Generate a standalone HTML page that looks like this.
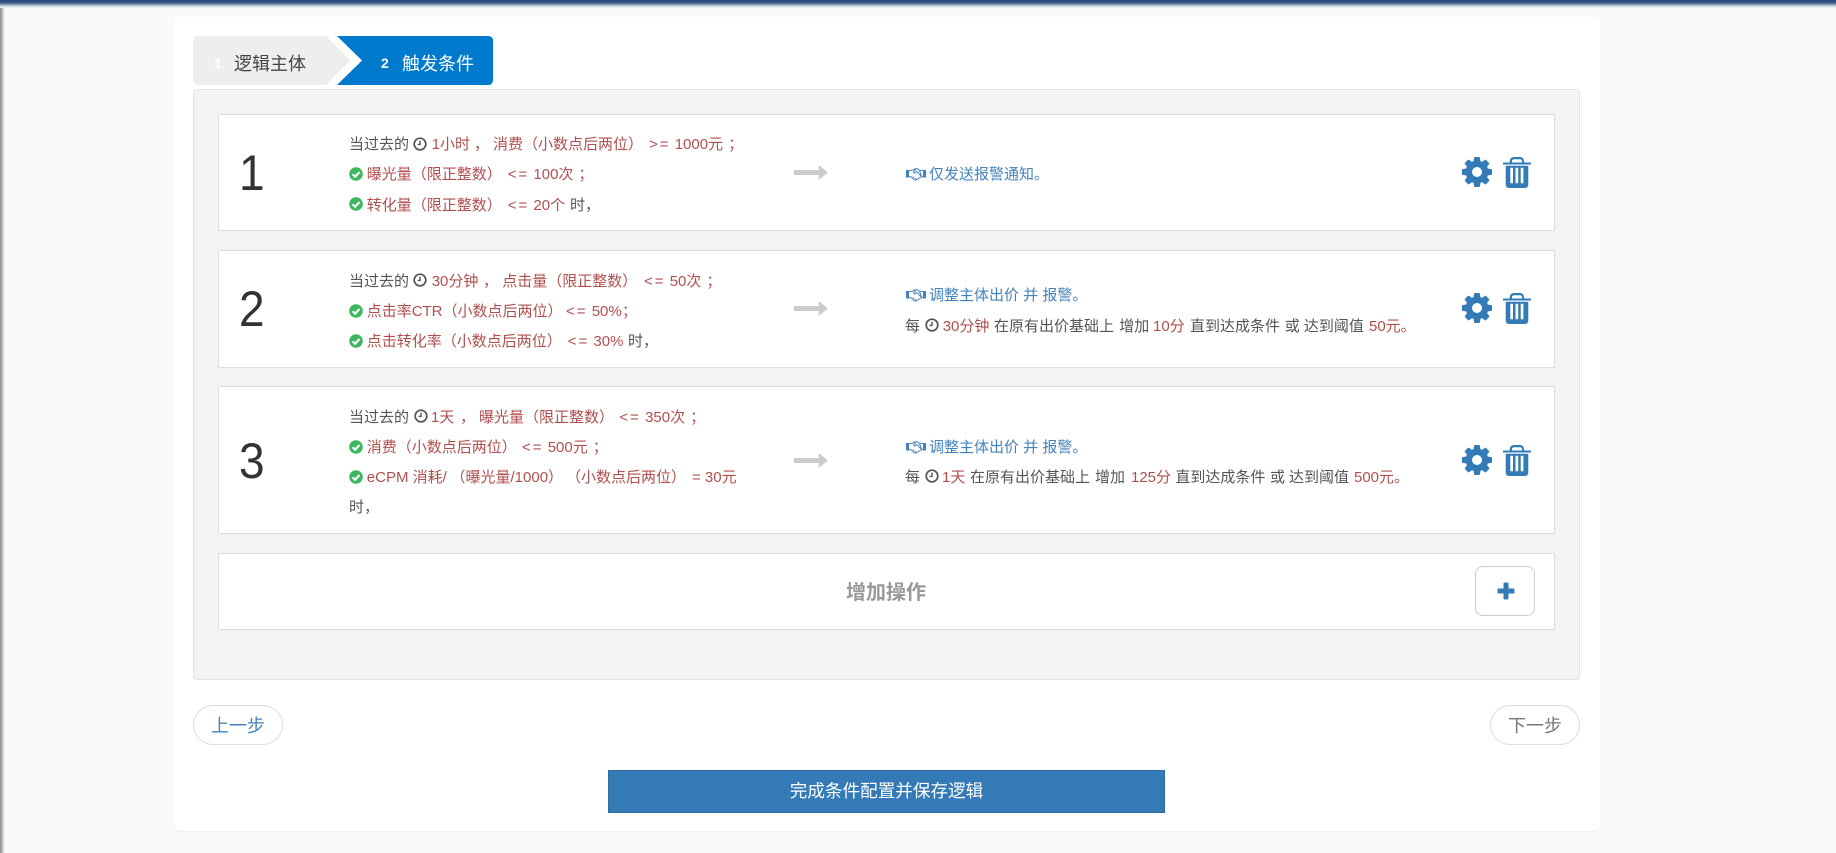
<!DOCTYPE html>
<html lang="zh-CN">
<head>
<meta charset="utf-8">
<title>触发条件</title>
<style>
html,body{margin:0;padding:0;width:1836px;height:853px;overflow:hidden;background:#fafafa;}
body{position:relative;font-family:"Liberation Sans","Noto Sans CJK SC",sans-serif;font-size:15px;color:#555;}
.abs{position:absolute;box-sizing:border-box;}
.top{left:0;top:0;width:1836px;height:8px;background:linear-gradient(to bottom,#28497c 0,#35548a 30%,#6f86a8 50%,#c8d0da 75%,#fafafa 100%);z-index:5;}
.lft{left:0;top:0;width:5px;height:853px;background:linear-gradient(to right,#8a8a8a 0,#b0b0b0 35%,#e0e0e0 70%,#fafafa 100%);z-index:4;}
.card{left:174px;top:17px;width:1426px;height:814px;background:#fff;border-radius:6px;box-shadow:0 1px 1px rgba(0,0,0,.06);}
.panel{left:193px;top:89px;width:1387px;height:591px;background:#f4f4f4;border:1px solid #e3e3e3;border-radius:4px;}
.row{left:218px;width:1337px;background:#fff;border:1px solid #ddd;}
.num{position:absolute;left:239px;font-size:50px;line-height:60px;color:#333;font-weight:400;transform:scaleX(.92);transform-origin:left center;}
.t{position:absolute;height:30px;line-height:30px;white-space:nowrap;margin-top:2px;}
.g{color:#555;}.r{color:#b0504e;}.b{color:#4383bd;}
.o{letter-spacing:2px;}
.s{display:inline-block;margin-left:5px;}
svg.i{position:absolute;display:block;overflow:visible;}
.tab{font-size:18px;line-height:30px;white-space:nowrap;position:absolute;margin-top:2px;}
.btn{background:#fff;border:1px solid #ddd;border-radius:20px;font-size:18px;text-align:center;line-height:40px;height:40px;}
.save{left:608px;top:770px;width:557px;height:43px;background:#337ab7;border:1px solid #2e6da4;color:#fff;font-size:17.6px;line-height:41px;text-align:center;}
</style>
</head>
<body>
<svg width="0" height="0" style="position:absolute">
<defs>
<symbol id="clock" viewBox="0 0 14 14"><circle cx="7" cy="7" r="5.8" fill="none" stroke="#555" stroke-width="1.7"/><path d="M7 3.6V7.4H4.6" fill="none" stroke="#555" stroke-width="1.4"/></symbol>
<symbol id="ok" viewBox="0 0 14 14"><circle cx="7" cy="7" r="6.8" fill="#3fb760"/><path d="M3.6 7.2L6.1 9.7L10.5 5" fill="none" stroke="#fff" stroke-width="2.1"/></symbol>
<symbol id="hand" viewBox="0 0 20 14"><path d="M0 3H3V10.500H0ZM17 3H20V10.500H17Z" fill="#4383bd"/><path d="M3 3.400L6.500 3.400L9 1.800L11.500 1.800L13.500 3.400L17 3.400M3 9.600L4.600 9.600L8.600 13L10.400 13L15.400 9.600L17 9.600M13.500 3.400L15.600 9.400M9.800 2.200L7.400 5.200L8.900 6.100L10.800 4.400L14.800 8.800M7 10.800L8.200 9.600M9.200 12L10.400 10.800" fill="none" stroke="#4383bd" stroke-width="1"/></symbol>
<symbol id="gear" viewBox="128 128 1536 1536"><path fill="#337ab7" d="M1152 896q0-106-75-181t-181-75-181 75-75 181 75 181 181 75 181-75 75-181zm512-109v222q0 12-8 23t-20 13l-185 28q-19 54-39 91 35 50 107 138 10 12 10 25t-9 23q-27 37-99 108t-94 71q-12 0-26-9l-138-108q-44 23-91 38-16 136-29 186-7 28-36 28h-222q-14 0-24.5-8.5t-11.5-21.5l-28-184q-49-16-90-37l-141 107q-10 9-25 9-14 0-25-11-126-114-165-168-7-10-7-23 0-12 8-23 15-21 51-66.5t54-70.5q-27-50-41-99l-183-27q-13-2-21-12.5t-8-23.5v-222q0-12 8-23t19-13l186-28q14-46 39-92-40-57-107-138-10-12-10-24 0-10 9-23 26-36 98.5-107.5t94.5-71.5q13 0 26 10l138 107q44-23 91-38 16-136 29-186 7-28 36-28h222q14 0 24.5 8.5t11.5 21.5l28 184q49 16 90 37l142-107q9-9 24-9 13 0 25 10 129 119 165 170 7 8 7 22 0 12-8 23-15 21-51 66.5t-54 70.5q26 50 41 98l183 28q13 2 21 12.5t8 23.5z"/></symbol>
<symbol id="trash" viewBox="0 0 28 31"><path fill="#337ab7" fill-rule="evenodd" d="M6.700 5.500V4.500Q6.700 0 11.500 0H16.500Q21 0 21 4.500V5.500H27.200Q28 5.500 28 6.300V7.500H0V6.300Q0 5.500 .8 5.500ZM9 5.500H19V4.200Q19 2.200 16.500 2.200H11.500Q9 2.200 9 4.200ZM2.700 8.800H25.300V27.400Q25.300 31 21.700 31H6.300Q2.700 31 2.700 27.400ZM7.300 10.700V26.200H10V10.700ZM12.500 10.700V26.200H15.200V10.700ZM17.700 10.700V26.200H20.400V10.700Z"/></symbol>
</defs>
</svg>

<div class="abs top"></div>
<div class="abs lft"></div>
<div class="abs card"></div>

<!-- tabs -->
<svg class="i" style="left:193px;top:36px" width="302" height="50" viewBox="0 0 302 50">
<path d="M5 0H133L157.500 24.500L133 49H5Q0 49 0 44V5Q0 0 5 0Z" fill="#eeeeee"/>
<path d="M144 0H295Q300 0 300 5V44Q300 49 295 49H144L169 24.500Z" fill="#007acc"/>
</svg>
<div class="tab" style="left:214px;top:46px;color:#fff;font-size:14px;font-weight:700">1</div>
<div class="tab" style="left:234px;top:47px;color:#444">逻辑主体</div>
<div class="tab" style="left:381px;top:46px;color:#fff;font-size:14px;font-weight:700">2</div>
<div class="tab" style="left:402px;top:47px;color:#fff">触发条件</div>

<div class="abs panel"></div>
<div class="abs row" style="top:114px;height:117px"></div>
<div class="abs row" style="top:250px;height:118px"></div>
<div class="abs row" style="top:386px;height:148px"></div>
<div class="abs row" style="top:553px;height:77px"></div>

<div class="num" style="top:143px">1</div>
<div class="num" style="top:279px">2</div>
<div class="num" style="top:431px">3</div>

<!-- row 1 -->
<span class="t g" style="left:349px;top:128px">当过去的</span>
<svg class="i" style="left:413px;top:137px" width="14" height="14"><use href="#clock"/></svg>
<span class="t r" style="left:431.700px;top:128px">1小时</span>
<span class="t r" style="left:474px;top:128px">，</span>
<span class="t r" style="left:493px;top:128px">消费（小数点后两位）</span>
<span class="t r" style="left:649px;top:128px"><span class="o">&gt;=</span> 1000元<span class="s">；</span></span>

<svg class="i" style="left:349px;top:167px" width="14" height="14"><use href="#ok"/></svg>
<span class="t r" style="left:366.700px;top:158px">曝光量（限正整数）</span>
<span class="t r" style="left:507.700px;top:158px"><span class="o">&lt;=</span> 100次<span class="s">；</span></span>

<svg class="i" style="left:349px;top:197px" width="14" height="14"><use href="#ok"/></svg>
<span class="t r" style="left:366.700px;top:189px">转化量（限正整数）</span>
<span class="t r" style="left:507.700px;top:189px"><span class="o">&lt;=</span> 20个</span>
<span class="t g" style="left:570px;top:189px">时，</span>

<svg class="i" style="left:794px;top:165px" width="34" height="15" viewBox="0 0 34 15"><path d="M0 5H24.700V0L34 7.500L24.700 15V10H0Z" fill="#cccccc"/></svg>
<svg class="i" style="left:905.500px;top:166.500px" width="20" height="14"><use href="#hand"/></svg>
<span class="t b" style="left:929px;top:158px">仅发送报警通知。</span>
<svg class="i" style="left:1462px;top:157px" width="30" height="30"><use href="#gear"/></svg>
<svg class="i" style="left:1503px;top:157px" width="28" height="31"><use href="#trash"/></svg>

<!-- row 2 -->
<span class="t g" style="left:349px;top:265px">当过去的</span>
<svg class="i" style="left:413px;top:273px" width="14" height="14"><use href="#clock"/></svg>
<span class="t r" style="left:431.700px;top:265px">30分钟</span>
<span class="t r" style="left:483px;top:265px">，</span>
<span class="t r" style="left:502.300px;top:265px">点击量（限正整数）</span>
<span class="t r" style="left:644px;top:265px"><span class="o">&lt;=</span> 50次<span class="s">；</span></span>

<svg class="i" style="left:349px;top:304px" width="14" height="14"><use href="#ok"/></svg>
<span class="t r" style="left:366.700px;top:295px">点击率CTR（小数点后两位）</span>
<span class="t r" style="left:566px;top:295px"><span class="o">&lt;=</span> 50%</span>
<span class="t r" style="left:622px;top:295px">；</span>

<svg class="i" style="left:349px;top:334px" width="14" height="14"><use href="#ok"/></svg>
<span class="t r" style="left:366.700px;top:325px">点击转化率（小数点后两位）</span>
<span class="t r" style="left:567.700px;top:325px"><span class="o">&lt;=</span> 30%</span>
<span class="t g" style="left:628px;top:325px">时，</span>

<svg class="i" style="left:794px;top:300.500px" width="34" height="15" viewBox="0 0 34 15"><path d="M0 5H24.700V0L34 7.500L24.700 15V10H0Z" fill="#cccccc"/></svg>
<svg class="i" style="left:905.500px;top:287.500px" width="20" height="14"><use href="#hand"/></svg>
<span class="t b" style="left:929px;top:279px">调整主体出价 并 报警。</span>
<span class="t g" style="left:905px;top:310px">每</span>
<svg class="i" style="left:925px;top:318px" width="14" height="14"><use href="#clock"/></svg>
<span class="t r" style="left:942.700px;top:310px">30分钟</span>
<span class="t g" style="left:994px;top:310px">在原有出价基础上</span>
<span class="t g" style="left:1119.300px;top:310px">增加</span>
<span class="t r" style="left:1153px;top:310px">10分</span>
<span class="t g" style="left:1190px;top:310px">直到达成条件</span>
<span class="t g" style="left:1284.800px;top:310px">或</span>
<span class="t g" style="left:1303.900px;top:310px">达到阈值</span>
<span class="t r" style="left:1369px;top:310px">50元。</span>
<svg class="i" style="left:1462px;top:293px" width="30" height="30"><use href="#gear"/></svg>
<svg class="i" style="left:1503px;top:293px" width="28" height="31"><use href="#trash"/></svg>

<!-- row 3 -->
<span class="t g" style="left:349px;top:401px">当过去的</span>
<svg class="i" style="left:413.500px;top:409px" width="14" height="14"><use href="#clock"/></svg>
<span class="t r" style="left:431px;top:401px">1天</span>
<span class="t r" style="left:460px;top:401px">，</span>
<span class="t r" style="left:479px;top:401px">曝光量（限正整数）</span>
<span class="t r" style="left:619.400px;top:401px"><span class="o">&lt;=</span> 350次<span class="s">；</span></span>

<svg class="i" style="left:349px;top:440px" width="14" height="14"><use href="#ok"/></svg>
<span class="t r" style="left:366.800px;top:431px">消费（小数点后两位）</span>
<span class="t r" style="left:522px;top:431px"><span class="o">&lt;=</span> 500元<span class="s">；</span></span>

<svg class="i" style="left:349px;top:470px" width="14" height="14"><use href="#ok"/></svg>
<span class="t r" style="left:366.800px;top:461px">eCPM 消耗/</span>
<span class="t r" style="left:450.500px;top:461px">（曝光量/1000）</span>
<span class="t r" style="left:566px;top:461px">（小数点后两位）</span>
<span class="t r" style="left:692px;top:461px">= 30元</span>
<span class="t g" style="left:349px;top:491px">时，</span>

<svg class="i" style="left:794px;top:452.500px" width="34" height="15" viewBox="0 0 34 15"><path d="M0 5H24.700V0L34 7.500L24.700 15V10H0Z" fill="#cccccc"/></svg>
<svg class="i" style="left:905.500px;top:439.500px" width="20" height="14"><use href="#hand"/></svg>
<span class="t b" style="left:929px;top:431px">调整主体出价 并 报警。</span>
<span class="t g" style="left:905px;top:461px">每</span>
<svg class="i" style="left:925px;top:469px" width="14" height="14"><use href="#clock"/></svg>
<span class="t r" style="left:942px;top:461px">1天</span>
<span class="t g" style="left:970px;top:461px">在原有出价基础上</span>
<span class="t g" style="left:1095px;top:461px">增加</span>
<span class="t r" style="left:1131px;top:461px">125分</span>
<span class="t g" style="left:1175.400px;top:461px">直到达成条件</span>
<span class="t g" style="left:1270px;top:461px">或</span>
<span class="t g" style="left:1289px;top:461px">达到阈值</span>
<span class="t r" style="left:1354px;top:461px">500元。</span>
<svg class="i" style="left:1462px;top:445px" width="30" height="30"><use href="#gear"/></svg>
<svg class="i" style="left:1503px;top:445px" width="28" height="31"><use href="#trash"/></svg>

<!-- add row -->
<span class="t" style="left:846px;top:578px;margin-top:0;font-size:20px;font-weight:700;color:#999">增加操作</span>
<div class="abs" style="left:1475px;top:566px;width:60px;height:50px;background:#fff;border:1px solid #ccc;border-radius:8px"></div>
<svg class="i" style="left:1497px;top:582px" width="18" height="18" viewBox="0 0 18 18"><path d="M7.500 1.500H10.500V7.500H16.500V10.500H10.500V16.500H7.500V10.500H1.500V7.500H7.500Z" fill="#337ab7" stroke="#337ab7" stroke-width="2" stroke-linejoin="round"/></svg>

<!-- buttons -->
<div class="abs btn" style="left:193px;top:705px;width:90px;color:#4383bd">上一步</div>
<div class="abs btn" style="left:1490px;top:705px;width:90px;color:#777">下一步</div>
<div class="abs save">完成条件配置并保存逻辑</div>
</body>
</html>
